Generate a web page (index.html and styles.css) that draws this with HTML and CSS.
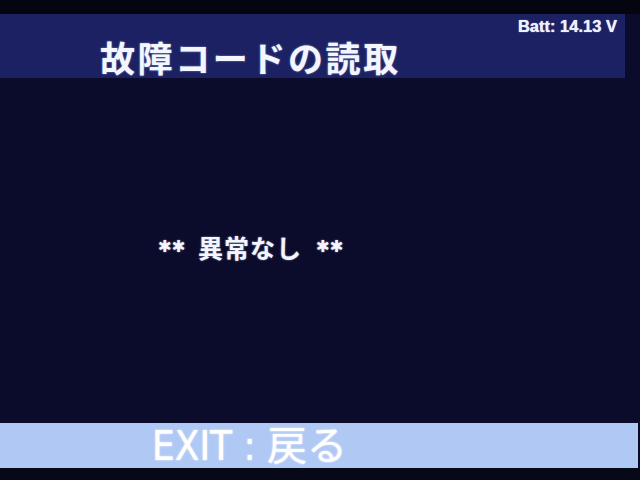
FILE: index.html
```html
<!DOCTYPE html>
<html lang="ja">
<head>
<meta charset="utf-8">
<title>故障コードの読取</title>
<link rel="stylesheet" href="styles.css">
</head>
<body>
<div class="screen">
  <div class="strip-top"></div>
  <header class="header">
    <h1 class="title">故障コードの読取</h1>
    <div class="batt">Batt: 14.13 V</div>
  </header>
  <main class="main">
    <p class="message"><span class="stars">✱✱</span><span class="msg-text">異常なし</span><span class="stars">✱✱</span></p>
  </main>
  <footer class="footer">
    <span class="exit">EXIT : 戻る</span>
  </footer>
  <div class="strip-bottom"></div>
</div>
</body>
</html>
```

FILE: styles.css
```css
html, body {
  margin: 0;
  padding: 0;
  background: #06061a;
}
.screen {
  width: 640px;
  height: 480px;
  display: flex;
  flex-direction: column;
  background: #0b0c2c;
  overflow: hidden;
}
.strip-top {
  height: 14px;
  background: #05050f;
}
.header {
  height: 64px;
  margin-right: 15px;
  background: #1b2163;
  display: flex;
  align-items: flex-start;
}
.title {
  margin: 23px 0 0 100px;
  font-family: "Noto Sans CJK JP", sans-serif;
  font-weight: 700;
  font-size: 35px;
  line-height: 40px;
  letter-spacing: 2.6px;
  color: #f4f6ff;
  text-shadow: 0 0 2px rgba(220, 230, 255, 0.6);
}
.batt {
  margin: 3px 8px 0 auto;
  font-family: "Liberation Sans", Arial, sans-serif;
  font-weight: 700;
  font-size: 16.5px;
  line-height: 18px;
  color: #eef0ff;
  letter-spacing: 0;
  text-shadow: 0 0 1px #ffffff;
}
.main {
  flex: 1;
  display: flex;
  align-items: center;
}
.message {
  margin: 0 0 8px 158px;
  display: flex;
  align-items: center;
  font-family: "Noto Sans CJK JP", sans-serif;
  font-weight: 700;
  color: #f4f6ff;
  text-shadow: 0 0 2px rgba(220, 230, 255, 0.6);
}
.stars {
  font-family: "DejaVu Sans", sans-serif;
  font-size: 16.5px;
  line-height: 16px;
  width: 28px;
  letter-spacing: 0;
  white-space: nowrap;
}
.msg-text {
  margin: 0 14px 0 12px;
  font-size: 25px;
  line-height: 30px;
  letter-spacing: 1px;
}
.footer {
  height: 45px;
  margin-right: 2px;
  background: #b0c8f4;
  display: flex;
  align-items: center;
}
.exit {
  margin-left: 152px;
  font-family: "DejaVu Sans Condensed", "Noto Sans CJK JP", sans-serif;
  font-size: 40px;
  line-height: 44px;
  color: #ffffff;
  text-shadow: 0 0 2px #ffffff;
}
.strip-bottom {
  height: 12px;
  background: #070818;
}
```
